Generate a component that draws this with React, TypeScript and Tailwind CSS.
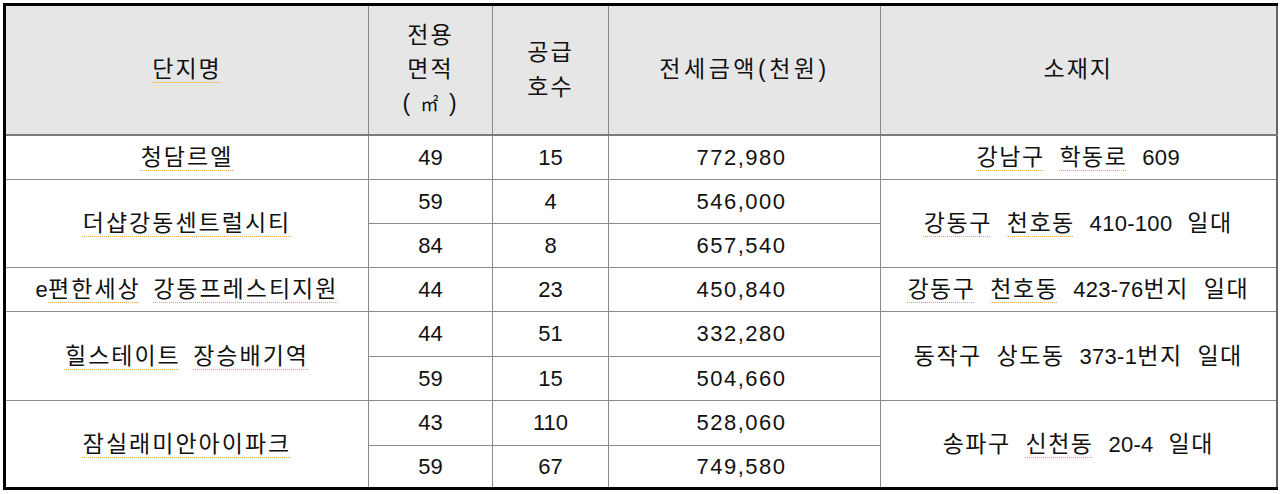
import React from 'react';

type Row = {
  name?: React.ReactNode;
  nameSpan?: number;
  area: string;
  units: string;
  price: string;
  addr?: React.ReactNode;
  addrSpan?: number;
  h: string;
};

// spell-check style dotted underline seen under many words
const U = ({ children }: { children: React.ReactNode }) => (
  <span className="underline decoration-dotted decoration-[#e3a35a] decoration-1 underline-offset-[5px]">
    {children}
  </span>
);

// latin digits inside korean text
const N = ({ children }: { children: React.ReactNode }) => (
  <span className="text-[22px] tracking-[0.3px]">{children}</span>
);

const rows: Row[] = [
  {
    name: <U>청담르엘</U>,
    nameSpan: 1,
    area: '49',
    units: '15',
    price: '772,980',
    addr: (
      <>
        <U>강남구</U> <U>학동로</U> <N>609</N>
      </>
    ),
    addrSpan: 1,
    h: 'h-[45px]',
  },
  {
    name: <U>더샵강동센트럴시티</U>,
    nameSpan: 2,
    area: '59',
    units: '4',
    price: '546,000',
    addr: (
      <>
        <U>강동구</U> <U>천호동</U> <N>410-100</N> 일대
      </>
    ),
    addrSpan: 2,
    h: 'h-[44px]',
  },
  { area: '84', units: '8', price: '657,540', h: 'h-[44px]' },
  {
    name: (
      <>
        <N>e</N>
        <U>편한세상</U> <U>강동프레스티지원</U>
      </>
    ),
    nameSpan: 1,
    area: '44',
    units: '23',
    price: '450,840',
    addr: (
      <>
        <U>강동구</U> <U>천호동</U> <N>423-76</N>번지 일대
      </>
    ),
    addrSpan: 1,
    h: 'h-[44px]',
  },
  {
    name: (
      <>
        <U>힐스테이트</U> <U>장승배기역</U>
      </>
    ),
    nameSpan: 2,
    area: '44',
    units: '51',
    price: '332,280',
    addr: (
      <>
        동작구 상도동 <N>373-1</N>번지 일대
      </>
    ),
    addrSpan: 2,
    h: 'h-[45px]',
  },
  { area: '59', units: '15', price: '504,660', h: 'h-[44px]' },
  {
    name: <U>잠실래미안아이파크</U>,
    nameSpan: 2,
    area: '43',
    units: '110',
    price: '528,060',
    addr: (
      <>
        송파구 <U>신천동</U> <N>20-4</N> 일대
      </>
    ),
    addrSpan: 2,
    h: 'h-[45px]',
  },
  { area: '59', units: '67', price: '749,580', h: 'h-[43px]' },
];

const cell = 'border border-[#8a8a8a] text-center align-middle p-0';

export default function App() {
  return (
    <div
      className="w-[1280px] h-[494px] bg-white pt-[3px] pl-[3px] text-[#111] text-[22px] leading-tight"
      style={{ fontFamily: '"Liberation Sans", "Noto Sans CJK KR", sans-serif' }}
    >
      <table className="w-[1272px] table-fixed border-collapse border-t-[3px] border-l-[3px] border-b-[3px] border-r-2 border-t-black border-l-black border-b-black border-r-[#666]">
        <colgroup>
          <col className="w-[364px]" />
          <col className="w-[124px]" />
          <col className="w-[116px]" />
          <col className="w-[272px]" />
          <col className="w-[396px]" />
        </colgroup>
        <thead>
          <tr className="h-[130px] bg-[#e6e6e6] border-b-2 border-b-[#7a7a7a]">
            <th className={`${cell} font-normal text-[23px] tracking-[2px]`}>
              <U>단지명</U>
            </th>
            <th className={`${cell} font-normal text-[23px] tracking-[2px] leading-[34px]`}>
              전용
              <br />
              면적
              <br />( <span className="text-[18px]">㎡</span> )
            </th>
            <th className={`${cell} font-normal text-[23px] tracking-[2px] leading-[35px]`}>
              공급
              <br />
              호수
            </th>
            <th className={`${cell} font-normal text-[23px] tracking-[3.5px]`}>전세금액(천원)</th>
            <th className={`${cell} font-normal text-[23px] tracking-[2px]`}>소재지</th>
          </tr>
        </thead>
        <tbody>
          {rows.map((r, i) => (
            <tr key={i} className={r.h}>
              {r.name !== undefined && (
                <td rowSpan={r.nameSpan} className={`${cell} text-[23px] tracking-[2px] [word-spacing:4px]`}>
                  {r.name}
                </td>
              )}
              <td className={cell}>{r.area}</td>
              <td className={cell}>{r.units}</td>
              <td className={`${cell} tracking-[1.5px] pr-[6px]`}>{r.price}</td>
              {r.addr !== undefined && (
                <td rowSpan={r.addrSpan} className={`${cell} text-[23px] tracking-[1.5px] [word-spacing:7px]`}>
                  {r.addr}
                </td>
              )}
            </tr>
          ))}
        </tbody>
      </table>
    </div>
  );
}
